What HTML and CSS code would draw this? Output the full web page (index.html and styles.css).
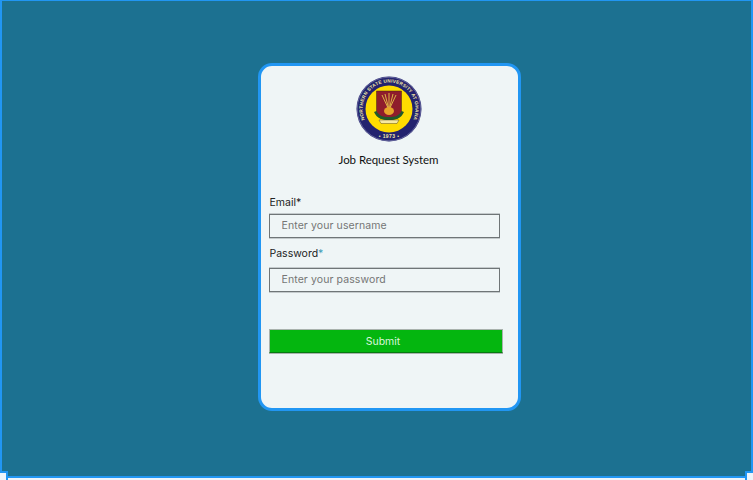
FILE: index.html
```html
<!DOCTYPE html>
<html lang="en">
<head>
<meta charset="utf-8">
<title>Job Request System</title>
<link rel="stylesheet" href="styles.css">
</head>
<body>
<div class="frame">
  <main class="stage">
    <form class="card">
      <svg class="logo" viewBox="0 0 66 66" width="66" height="66" aria-label="University seal">
        <defs>
          <path id="arcTop" d="M12.7 50 A26.5 26.5 0 1 1 53.3 50"/>
        </defs>
        <circle cx="33" cy="33" r="32.5" fill="#23236f"/>
        <circle cx="33" cy="33" r="31.8" fill="none" stroke="#8d8fb8" stroke-width=".6"/>
        <circle cx="33" cy="33" r="23.5" fill="#ffdc00"/>
        <text class="seal-text"><textPath href="#arcTop" startOffset="50%" text-anchor="middle">NORTHERN STATE UNIVERSITY AT GHANA</textPath></text>
        <text class="seal-year" x="33" y="62" text-anchor="middle">• 1973 •</text>
        <path d="M20.5 15 H45.5 V37 C45.5 42 39 43 33 44 C27 43 20.5 42 20.5 37 Z" fill="#8f1d2c" stroke="#3d2a12" stroke-width=".5"/>
        <path d="M26 19 L33 34 L40 19 M33 17 V34 M29 18 L33 34 L37 18" fill="none" stroke="#e6c64a" stroke-width=".9"/>
        <ellipse cx="33" cy="35" rx="5" ry="4" fill="#e8a42a"/>
        <path d="M18 36 C21 43 27 44 33 44 C39 44 45 43 48 36 L45.5 35 C43 40 39 41 33 41 C27 41 23 40 20.5 35 Z" fill="#1f5a2c"/>
        <path d="M23 44 H43 L41 47.5 H25 Z" fill="#f6e9a0" stroke="#3d2a12" stroke-width=".4"/>
      </svg>
      <h1 class="title">Job Request System</h1>
      <label class="label label-email" for="email">Email<span class="req">*</span></label>
      <input class="field" id="email" type="text" placeholder="Enter your username">
      <label class="label label-password" for="password">Password<span class="req req-accent">*</span></label>
      <input class="field field-password" id="password" type="password" placeholder="Enter your password">
      <button class="submit" type="button">Submit</button>
    </form>
  </main>
  <span class="handle handle-left"></span>
  <span class="handle handle-right"></span>
</div>
</body>
</html>
```
FILE: styles.css
```css
* { box-sizing: border-box; }
html, body { margin: 0; padding: 0; background: #eef5fb; }
body { width: 753px; height: 480px; overflow: hidden; }
.frame { position: relative; width: 753px; height: 480px; }
.stage {
  height: 478px;
  background: #1c7191;
  border: 2px solid #2196f3;
  border-width: 1px 2px 2px 2px;
  display: flex;
  justify-content: center;
  align-items: flex-start;
  padding: 62px 0 0 25px;
}
.card {
  width: 263px;
  height: 348px;
  background: #eff5f6;
  border: 3px solid #2196f3;
  border-radius: 14px;
  padding: 10px 17px 0 8px;
  display: flex;
  flex-direction: column;
  font-family: Inter, "Liberation Sans", sans-serif;
}
.logo { display: block; align-self: center; margin-left: 8px; flex: none; }
.title {
  margin: 10px 0 0;
  font: 400 11.5px/16px Lato, "Noto Sans", sans-serif;
  letter-spacing: -.05px;
  color: #111;
  text-align: center;
  padding-left: 8px;
}
.label { font-size: 10.5px; line-height: 14px; color: #222; display: block; padding-left: 1px; }
.label-email { margin-top: 28px; }
.label-password { margin-top: 9px; }
.req { color: #222; }
.req-accent { color: #3a9cb8; }
.field {
  display: block;
  width: 231px;
  height: 24px;
  margin-top: 4px;
  padding: 0 12px 1px;
  background: #eff5f6;
  border: 1px solid #6f7577;
  box-shadow: 0 1px 0 #c4cacc, 0 -1px 0 #c4cacc;
  border-radius: 0;
  font: 400 10.5px Inter, "Liberation Sans", sans-serif;
  letter-spacing: .1px;
  color: #333;
  outline: none;
}
.field-password { margin-top: 7px; }
.submit {
  display: block;
  width: 234px;
  height: 24px;
  margin-top: 37px;
  padding: 0 5px 0 0;
  background: #04b60f;
  border: 1px solid #a9b2ad;
  border-bottom: 1px solid #067a10;
  box-shadow: 0 1px 0 #a9b2ad;
  color: #d9f5dc;
  font: 400 10.5px Inter, "Liberation Sans", sans-serif;
  letter-spacing: 0;
}
.seal-text { font: 700 4.7px "Liberation Sans", sans-serif; fill: #f3e9a8; letter-spacing: .2px; }
.seal-year { font: 700 5px "Liberation Sans", sans-serif; fill: #f3e9a8; letter-spacing: .4px; }
.handle {
  position: absolute;
  bottom: 0;
  width: 8px;
  height: 9px;
  background: #eef5fb;
  border: 2px solid #2196f3;
  border-bottom: 0;
}
.handle-left { left: 0; border-left: 0; }
.handle-right { right: 0; border-right: 0; }
```
